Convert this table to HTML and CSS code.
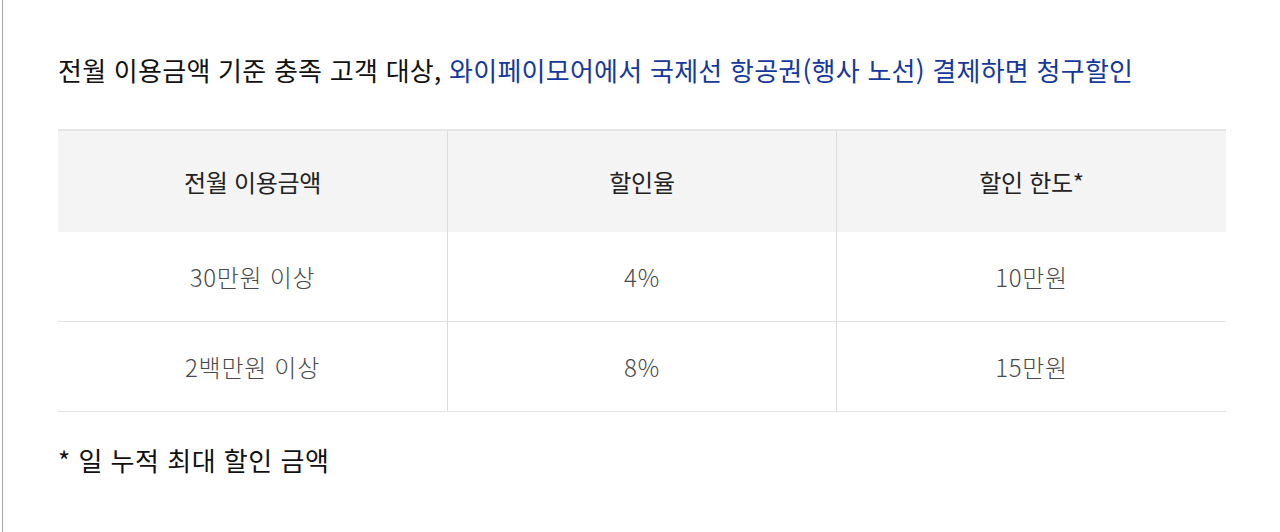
FILE: index.html
```html
<!DOCTYPE html>
<html lang="ko">
<head>
<meta charset="utf-8">
<link rel="stylesheet" href="styles.css">
</head>
<body>
<div class="page">
  <div class="content">
    <p class="title">전월 이용금액 기준 충족 고객 대상, <span class="hl">와이페이모어에서 국제선 항공권(행사 노선) 결제하면 청구할인</span></p>
    <div class="table">
      <div class="row head">
        <div class="cell">전월 이용금액</div>
        <div class="cell">할인율</div>
        <div class="cell">할인 한도*</div>
      </div>
      <div class="row">
        <div class="cell">30만원 이상</div>
        <div class="cell">4%</div>
        <div class="cell">10만원</div>
      </div>
      <div class="row">
        <div class="cell">2백만원 이상</div>
        <div class="cell">8%</div>
        <div class="cell">15만원</div>
      </div>
    </div>
    <p class="note">* 일 누적 최대 할인 금액</p>
  </div>
</div>
</body>
</html>
```

FILE: styles.css
```css
html, body {
  margin: 0;
  padding: 0;
  background: #fff;
}
body {
  font-family: "Noto Sans CJK KR", "Noto Sans", sans-serif;
  color: #111;
}
.page {
  margin-left: 2px;
  border-left: 1px solid #a9a9a9;
  height: 532px;
  box-sizing: border-box;
}
.content {
  padding: 52px 0 0 55px;
  width: 1168px;
}
.title {
  margin: 0;
  font-size: 26px;
  line-height: 36px;
  font-weight: 400;
  letter-spacing: 0.25px;
  color: #111;
  white-space: nowrap;
}
.hl {
  color: #15389c;
}
.table {
  margin-top: 41px;
  border-top: 2px solid #e6e6e6;
}
.row {
  display: grid;
  grid-template-columns: 389px 389px 390px;
  height: 90px;
  box-sizing: border-box;
  border-bottom: 1px solid #e2e2e2;
}
.row.head {
  height: 101px;
  background: #f4f4f4;
  border-bottom: none;
}
.cell {
  display: flex;
  align-items: center;
  justify-content: center;
  font-size: 24px;
  color: #4a4a4a;
  font-weight: 300;
  letter-spacing: 0.7px;
  border-left: 1px solid #dcdcdc;
}
.cell:first-child {
  border-left: none;
}
.head .cell {
  color: #222;
  font-weight: 400;
  letter-spacing: -0.3px;
}
.note {
  margin: 30px 0 0;
  font-size: 26px;
  line-height: 36px;
  letter-spacing: 0.5px;
  color: #111;
}
```
